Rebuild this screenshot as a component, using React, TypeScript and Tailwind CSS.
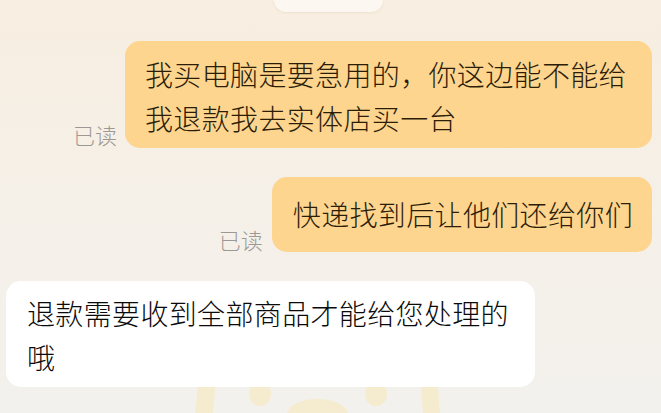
import React from "react";

const font = { fontFamily: '"Noto Sans CJK SC", "Noto Sans", sans-serif' };

export default function App() {
  return (
    <div
      className="relative w-[661px] h-[413px] overflow-hidden bg-gradient-to-b from-[#f8eee1] via-[#f5f0e8] to-[#f3f1ed]"
      style={font}
    >
      {/* watermark */}
      <svg
        className="absolute left-0 top-0"
        width="661"
        height="413"
        viewBox="0 0 661 413"
      >
        <g fill="#f8e7b8" opacity="0.55">
          <path d="M199 378 L216 378 L213 413 L195 413 Z" />
          <ellipse cx="260" cy="394" rx="11" ry="12" />
          <ellipse cx="376" cy="394" rx="11" ry="12" />
          <path d="M420 378 L437 378 L440 413 L423 413 Z" />
          <path d="M287 413 C290 403 305 399 318 399 C331 399 345 404 348 413 Z" />
        </g>
      </svg>

      <div className="relative flex flex-col font-light">
        {/* top partial pill */}
        <div className="ml-[274px] w-[109px] h-[12px] rounded-b-[14px] bg-[#fcf8f1] shadow-[0_1px_2px_rgba(230,215,190,0.5)]" />

        {/* row 1 */}
        <div className="mt-[29px] flex justify-end items-end pr-[9px] gap-[8px]">
          <span className="mb-[1px] text-[22px] leading-[26px] text-[#9c9994]">已读</span>
          <div className="w-[527px] rounded-[15px] bg-[#fdd58f] pl-[20px] pr-[18px] pt-[11px] pb-[8px] text-[28px] leading-[44px] tracking-[0.35px] text-[#2c1d08]">
            我买电脑是要急用的，你这边能不能给我退款我去实体店买一台
          </div>
        </div>

        {/* row 2 */}
        <div className="mt-[29px] flex justify-end items-end pr-[9px] gap-[9px]">
          <span className="mb-[0px] text-[22px] leading-[26px] text-[#9c9994]">已读</span>
          <div className="rounded-[15px] bg-[#fdd58f] pl-[21px] pr-[19px] pt-[15px] pb-[16px] text-[28px] leading-[44px] tracking-[0.35px] text-[#2c1d08]">
            快递找到后让他们还给你们
          </div>
        </div>

        {/* row 3 */}
        <div className="mt-[29px] flex pl-[6px]">
          <div className="w-[529px] rounded-[15px] bg-white pl-[21px] pr-[18px] pt-[10px] pb-[8px] text-[28px] leading-[44px] tracking-[0.35px] text-[#0a0a0a]">
            退款需要收到全部商品才能给您处理的哦
          </div>
        </div>
      </div>
    </div>
  );
}
